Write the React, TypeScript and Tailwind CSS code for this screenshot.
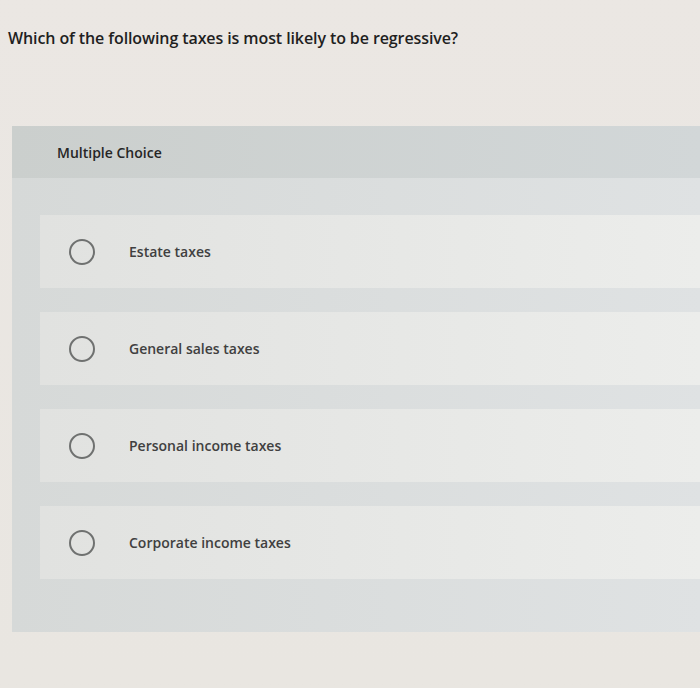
import React from "react";

const options = [
  "Estate taxes",
  "General sales taxes",
  "Personal income taxes",
  "Corporate income taxes",
];

export default function App() {
  return (
    <div
      className="w-[700px] h-[688px] overflow-hidden bg-linear-to-b from-[#ebe7e3] to-[#e9e6e1] pt-[27px]"
      style={{ fontFamily: '"Open Sans", "Liberation Sans", sans-serif' }}
    >
      <div className="pl-[8px] text-[16px] leading-[22px] font-semibold text-[#1f1f1f] tracking-[-0.1px]">
        Which of the following taxes is most likely to be regressive?
      </div>

      <div className="ml-[12px] mt-[77px] bg-linear-to-r from-[#d6d9d8] to-[#dfe2e3]">
        <div className="h-[52px] flex items-center pl-[45px] bg-linear-to-r from-[#cbcfcd] to-[#d2d7d8]">
          <span className="text-[14px] font-semibold text-[#262626]">
            Multiple Choice
          </span>
        </div>
        <div className="pt-[37px] pb-[53px] pl-[28px] flex flex-col gap-[24px]">
          {options.map((o) => (
            <div
              key={o}
              className="h-[73px] flex items-center bg-linear-to-r from-[#e1e2e0] to-[#ecedeb]"
            >
              <div className="ml-[29px] w-[26px] h-[26px] rounded-full border-2 border-[#6f7170]" />
              <span className="ml-[34px] text-[14px] font-semibold text-[#404040]">
                {o}
              </span>
            </div>
          ))}
        </div>
      </div>
    </div>
  );
}
